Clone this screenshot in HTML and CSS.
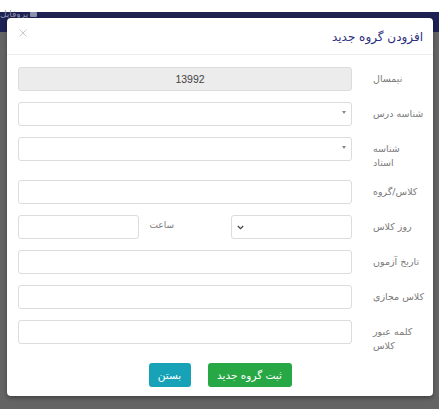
FILE: index.html
```html
<!DOCTYPE html>
<html lang="fa">
<head>
<meta charset="utf-8">
<link rel="stylesheet" href="styles.css">
</head>
<body>
<div class="page">
  <div class="topstrip"></div>
  <div class="navbar"><span class="nav-user"><span class="nav-icon"></span>پروفایل</span></div>
  <div class="backdrop-area"></div>
</div>
<div class="modal" dir="rtl">
  <div class="modal-header">
    <h4 class="modal-title">افزودن گروه جدید</h4>
    <span class="close"><svg width="8" height="8" viewBox="0 0 8 8"><path d="M0.5 0.5L7.5 7.5M7.5 0.5L0.5 7.5" stroke="#c8c8c8" stroke-width="1"/></svg></span>
  </div>
  <div class="modal-body">
    <div class="row">
      <label class="lbl">نیمسال</label>
      <div class="ctrl"><div class="field disabled"><span class="num">13992</span></div></div>
    </div>
    <div class="row">
      <label class="lbl">شناسه درس</label>
      <div class="ctrl"><div class="field select"><span class="caret"></span></div></div>
    </div>
    <div class="row">
      <label class="lbl">شناسه<br>استاد</label>
      <div class="ctrl"><div class="field select"><span class="caret"></span></div></div>
    </div>
    <div class="row">
      <label class="lbl">کلاس/گروه</label>
      <div class="ctrl"><div class="field"></div></div>
    </div>
    <div class="row">
      <label class="lbl">روز کلاس</label>
      <div class="ctrl split">
        <div class="field small chev"><svg width="7" height="5" viewBox="0 0 7 5"><path d="M0.8 1L3.5 3.6L6.2 1" fill="none" stroke="#444" stroke-width="1.3"/></svg></div>
        <span class="sublbl">ساعت</span>
        <div class="field small"></div>
      </div>
    </div>
    <div class="row">
      <label class="lbl">تاریخ آزمون</label>
      <div class="ctrl"><div class="field"></div></div>
    </div>
    <div class="row">
      <label class="lbl">کلاس مجازی</label>
      <div class="ctrl"><div class="field"></div></div>
    </div>
    <div class="row">
      <label class="lbl">کلمه عبور<br>کلاس</label>
      <div class="ctrl"><div class="field"></div></div>
    </div>
  </div>
  <div class="modal-footer">
    <button class="btn btn-green">ثبت گروه جدید</button>
    <button class="btn btn-teal">بستن</button>
  </div>
</div>
</body>
</html>
```

FILE: styles.css
```css
html, body {
  margin: 0;
  padding: 0;
}
body {
  width: 439px;
  height: 409px;
  overflow: hidden;
  background: #646464;
  font-family: "DejaVu Sans", "Liberation Sans", sans-serif;
}
.page {
  display: flex;
  flex-direction: column;
  height: 409px;
}
.topstrip {
  height: 12px;
  background: #ffffff;
}
.navbar {
  height: 20px;
  background: #1e2153;
  display: flex;
  align-items: flex-start;
}
.nav-user {
  display: flex;
  align-items: center;
  gap: 2px;
  direction: rtl;
  font-size: 9px;
  line-height: 9px;
  color: #8d8fae;
  padding-left: 0;
  margin-top: -2px;
}
.nav-icon {
  width: 7px;
  height: 5px;
  background: #8d8fae;
  border-radius: 1px;
}
.backdrop-area {
  flex: 1;
  background: #646464;
}
.modal {
  position: absolute;
  left: 7px;
  top: 18px;
  width: 426px;
  background: #ffffff;
  border-radius: 4px;
  box-shadow: 0 2px 4px rgba(0, 0, 0, 0.35);
}
.modal-header {
  height: 36px;
  border-bottom: 1px solid #ececec;
  display: flex;
  align-items: center;
  justify-content: space-between;
  padding: 0 10px 0 12px;
}
.modal-title {
  margin: 0;
  font-size: 12px;
  font-weight: normal;
  color: #2b2e7e;
  line-height: 16px;
  padding-top: 1px;
}
.close {
  display: flex;
  margin-top: -6px;
}
.modal-body {
  padding: 12px 0 0 11px;
}
.row {
  display: flex;
  align-items: flex-start;
  margin-bottom: 11px;
}
.lbl {
  width: 60px;
  padding: 5px 0 0 21px;
  box-sizing: content-box;
  text-align: left;
  white-space: nowrap;
  font-size: 9.5px;
  line-height: 13.5px;
  color: #7a7a7a;
}
.ctrl {
  width: 334px;
  display: flex;
}
.field {
  box-sizing: border-box;
  width: 100%;
  height: 24px;
  border: 1px solid #dcdcdc;
  border-radius: 3px;
  background: #ffffff;
  display: flex;
  align-items: center;
}
.field.disabled {
  background: #ececec;
  justify-content: center;
  padding-left: 10px;
}
.num {
  font-family: "Liberation Sans", sans-serif;
  font-size: 10.5px;
  color: #444;
}
.field.select {
  padding-right: 5px;
}
.caret {
  width: 0;
  height: 0;
  border-left: 2.5px solid transparent;
  border-right: 2.5px solid transparent;
  border-top: 3px solid #888;
  margin-top: -3px;
}
.split {
  align-items: center;
}
.field.small {
  width: 121px;
  flex: none;
}
.field.chev {
  justify-content: flex-end;
  padding-left: 5px;
}
.field.chev svg {
  margin-top: 1px;
}
.sublbl {
  flex: 1;
  padding-right: 57px;
  font-size: 9px;
  color: #7a7a7a;
  margin-top: -4px;
}
.modal-footer {
  display: flex;
  justify-content: center;
  gap: 17px;
  padding: 0 0 9px 0;
}
.btn {
  height: 24px;
  border: none;
  border-radius: 3px;
  color: #ffffff;
  font-family: "DejaVu Sans", sans-serif;
  font-size: 10.5px;
  padding: 0;
  line-height: 24px;
}
.btn-green {
  width: 84px;
  background: #28a745;
}
.btn-teal {
  width: 42px;
  background: #17a2b8;
}
```
